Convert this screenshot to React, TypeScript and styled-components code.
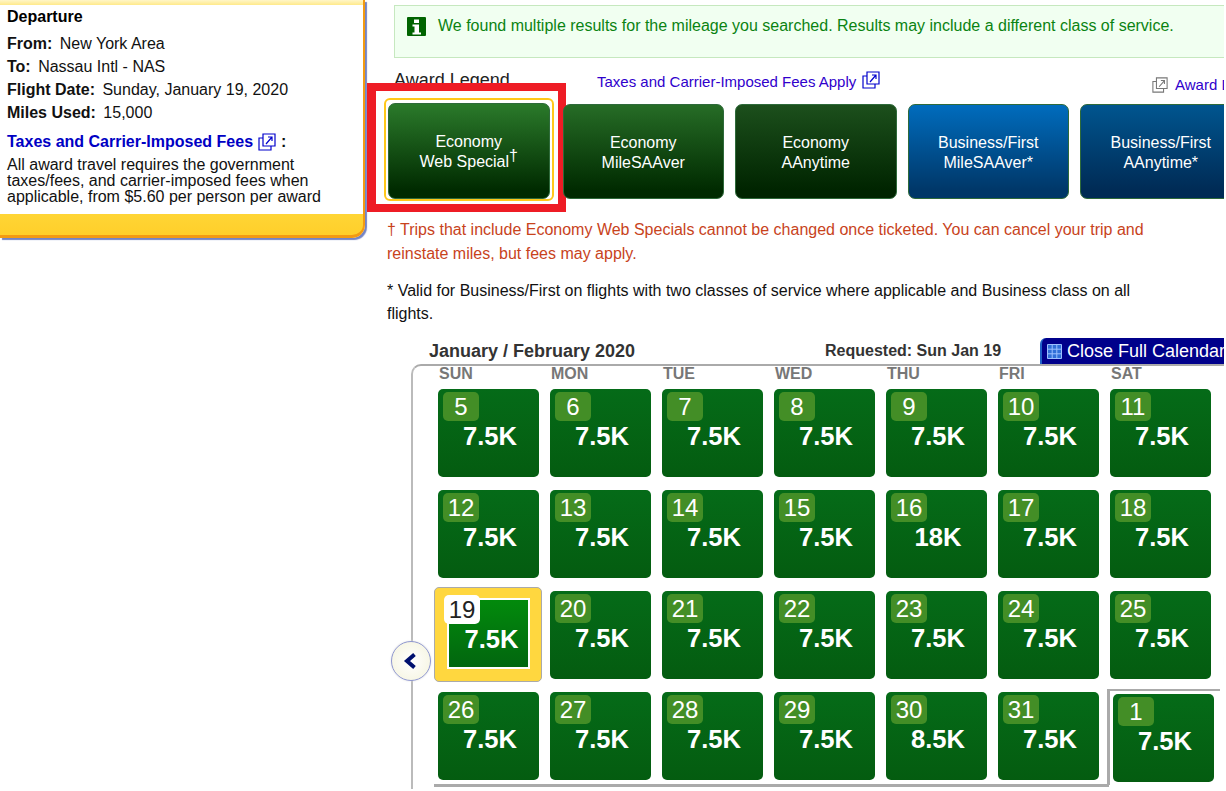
import styled, { createGlobalStyle } from "styled-components";

const weeks = [
  [["5", "7.5K"], ["6", "7.5K"], ["7", "7.5K"], ["8", "7.5K"], ["9", "7.5K"], ["10", "7.5K"], ["11", "7.5K"]],
  [["12", "7.5K"], ["13", "7.5K"], ["14", "7.5K"], ["15", "7.5K"], ["16", "18K"], ["17", "7.5K"], ["18", "7.5K"]],
  [["19", "7.5K"], ["20", "7.5K"], ["21", "7.5K"], ["22", "7.5K"], ["23", "7.5K"], ["24", "7.5K"], ["25", "7.5K"]],
  [["26", "7.5K"], ["27", "7.5K"], ["28", "7.5K"], ["29", "7.5K"], ["30", "8.5K"], ["31", "7.5K"], ["1", "7.5K"]],
];

const dayNames = ["SUN", "MON", "TUE", "WED", "THU", "FRI", "SAT"];

const awards = [
  { top: "#2b7a2b", bottom: "#002a00", line1: "Economy", line2: "Web Special", selected: true },
  { top: "#266c26", bottom: "#002a00", line1: "Economy", line2: "MileSAAver" },
  { top: "#1c4f1c", bottom: "#002400", line1: "Economy", line2: "AAnytime" },
  { top: "#006cbd", bottom: "#003768", line1: "Business/First", line2: "MileSAAver*" },
  { top: "#00558f", bottom: "#002b55", line1: "Business/First", line2: "AAnytime*" },
];

function ExternalIcon({ color = "#0000cc", size = 18 }: { color?: string; size?: number }) {
  return (
    <svg width={size} height={size} viewBox="0 0 18 18" fill="none" stroke={color} strokeWidth="1.2">
      <path d="M5 1h12v12H5z" />
      <path d="M5 5H1v12h12v-4" />
      <path d="M8 11l6-7M10 4h4v4" />
    </svg>
  );
}

function App() {
  return (
    <>
      <GlobalStyle />
      <Page>
        <Sidebar>
          <SidebarBody>
            <SidebarTitle>Departure</SidebarTitle>
            <InfoRow>
              <b>From:</b> New York Area
            </InfoRow>
            <InfoRow>
              <b>To:</b> Nassau Intl - NAS
            </InfoRow>
            <InfoRow>
              <b>Flight Date:</b> Sunday, January 19, 2020
            </InfoRow>
            <InfoRow>
              <b>Miles Used:</b> 15,000
            </InfoRow>
            <FeesTitle>
              <FeesLink>Taxes and Carrier-Imposed Fees</FeesLink> <ExternalIcon />:
            </FeesTitle>
            <FeesText>
              All award travel requires the government taxes/fees, and carrier-imposed fees when applicable, from $5.60
              per person per award
            </FeesText>
          </SidebarBody>
        </Sidebar>
        <Main>
          <Alert>
            <svg width="19" height="19" viewBox="0 0 19 19">
              <rect width="19" height="19" rx="1" fill="#006400" />
              <rect x="7" y="2.5" width="5" height="3.5" fill="#fff" />
              <path d="M5.5 7.5H12v8h2v2H5.5v-2h2v-6h-2z" fill="#fff" />
            </svg>
            We found multiple results for the mileage you searched. Results may include a different class of service.
          </Alert>
          <LegendRow>
            <LegendTitle>Award Legend</LegendTitle>
            <LegendLink>
              Taxes and Carrier-Imposed Fees Apply <ExternalIcon />
            </LegendLink>
            <AwardDetails>
              <ExternalIcon color="#777" size={16} /> Award Details
            </AwardDetails>
          </LegendRow>
          <AwardRow>
            {awards.map((a) => (
              <AwardButton key={a.line1 + a.line2} $top={a.top} $bottom={a.bottom} $selected={a.selected}>
                {a.line1}
                <br />
                {a.line2}
                {a.selected && (
                  <>
                    <sup>†</sup>
                    <RedBox />
                  </>
                )}
              </AwardButton>
            ))}
          </AwardRow>
          <Warning>
            † Trips that include Economy Web Specials cannot be changed once ticketed. You can cancel your trip and
            <br />
            reinstate miles, but fees may apply.
          </Warning>
          <Note>
            * Valid for Business/First on flights with two classes of service where applicable and Business class on all
            <br />
            flights.
          </Note>
          <CalendarHeader>
            <MonthTitle>January / February 2020</MonthTitle>
            <Requested>Requested: Sun Jan 19</Requested>
            <CloseButton>
              <svg width="15" height="15" viewBox="0 0 15 15" fill="#2f6fd8" stroke="#9cc0ff" strokeWidth="1">
                <path d="M.5.5h14v14H.5zM5.2.5v14M9.8.5v14M.5 5.2h14M.5 9.8h14" />
              </svg>
              Close Full Calendar
            </CloseButton>
          </CalendarHeader>
          <CalendarFrame>
            <DayRow>
              {dayNames.map((d) => (
                <DayName key={d}>{d}</DayName>
              ))}
            </DayRow>
            <DayGrid>
              {weeks.flat().map(([day, miles]) => (
                <DayCell key={day} $selected={day === "19"} $nextMonth={day === "1"}>
                  <DayBadge $selected={day === "19"}>{day}</DayBadge>
                  <Miles>{miles}</Miles>
                </DayCell>
              ))}
            </DayGrid>
            <NavArrow $side="prev">
              <svg width="18" height="18" viewBox="0 0 18 18">
                <path d="M12.5 2.5L5 9l7.5 6.5" fill="none" stroke="#00106e" strokeWidth="4" />
              </svg>
            </NavArrow>
            <NavArrow $side="next" />
          </CalendarFrame>
        </Main>
      </Page>
    </>
  );
}

export default App;

const GlobalStyle = createGlobalStyle`
  html, body {
    margin: 0;
    padding: 0;
    background: #fff;
    overflow: hidden;
  }
`;

const Page = styled.div`
  display: flex;
  align-items: flex-start;
  width: 1226px;
  height: 791px;
  overflow: hidden;
  font-family: "Liberation Sans", Arial, sans-serif;
  font-size: 16px;
  color: #111;
`;

const Sidebar = styled.aside`
  flex: 0 0 365px;
  box-sizing: border-box;
  width: 365px;
  height: 238px;
  padding-top: 5px;
  border-right: 2px solid #f39a12;
  border-bottom: 3px solid #f39a12;
  border-bottom-right-radius: 13px;
  background: linear-gradient(#fff6c8, #ffe98a) top / 100% 5px no-repeat, linear-gradient(#fffbe0, #ffd93c 85%, #ffcf2a);
  box-shadow: 2px 2px 1px #7484c4;
`;

const SidebarBody = styled.div`
  box-sizing: border-box;
  height: 209px;
  padding: 3px 0 0 7px;
  background: #fff;
`;

const SidebarTitle = styled.div`
  font-weight: 700;
  line-height: 17px;
  margin-bottom: 7px;
  color: #000;
`;

const InfoRow = styled.div`
  line-height: 23px;

  b {
    margin-right: 3px;
  }
`;

const FeesTitle = styled.div`
  display: flex;
  align-items: center;
  gap: 5px;
  margin-top: 6px;
  height: 24px;
  font-weight: 700;
`;

const FeesLink = styled.span`
  color: #0000c4;
`;

const FeesText = styled.p`
  margin: 3px 0 0;
  width: 335px;
  line-height: 16px;
`;

const Main = styled.main`
  flex: 0 0 861px;
  box-sizing: border-box;
  width: 861px;
  margin-left: -2px;
  padding: 5px 0 0 24px;
  overflow: hidden;
  height: 791px;
`;

const Alert = styled.div`
  display: flex;
  align-items: flex-start;
  gap: 12px;
  box-sizing: border-box;
  width: 860px;
  height: 53px;
  margin-left: 7px;
  padding: 11px 0 0 12px;
  border: 1px solid #c6e8bf;
  background: #f1fff1;
  color: #0b8312;
  line-height: 18px;
  white-space: nowrap;
`;

const LegendRow = styled.div`
  display: flex;
  align-items: flex-start;
  height: 46px;
  padding-left: 7px;
  white-space: nowrap;
`;

const LegendTitle = styled.div`
  flex: 0 0 203px;
  margin-top: 11px;
  font-size: 18px;
  line-height: 22px;
  color: #222;
`;

const LegendLink = styled.div`
  display: flex;
  align-items: flex-start;
  gap: 6px;
  flex: 0 0 555px;
  margin-top: 13px;
  font-size: 15px;
  line-height: 21px;
  color: #3000cc;
`;

const AwardDetails = styled.div`
  display: flex;
  align-items: center;
  gap: 7px;
  margin-top: 17px;
  font-size: 15px;
  line-height: 20px;
  color: #3000cc;
`;

const AwardRow = styled.div`
  display: flex;
  gap: 11px;
  height: 95px;
  width: 900px;
  margin-left: 1px;
`;

const AwardButton = styled.button<{ $top: string; $bottom: string; $selected?: boolean }>`
  position: relative;
  flex: 0 0 161.5px;
  box-sizing: border-box;
  height: ${(p) => (p.$selected ? "96.5px" : "95px")};
  margin-top: ${(p) => (p.$selected ? "-1.5px" : "0")};
  margin-right: ${(p) => (p.$selected ? "2px" : "0")};
  padding: 2px 0 0;
  border: 1px solid #2e6a3a;
  border-radius: 7px;
  background: linear-gradient(${(p) => p.$top}, ${(p) => p.$bottom} 92%);
  color: #fff;
  font-family: inherit;
  font-size: 16px;
  line-height: 20px;
  text-align: center;

  ${(p) =>
    p.$selected &&
    `
    &::before {
      content: "";
      position: absolute;
      inset: -6px -5px -3px -5px;
      border: 2px solid #ffc81a;
      border-radius: 6px;
    }
  `}

  sup {
    font-size: 16px;
    line-height: 0;
    vertical-align: 6px;
  }
`;

const RedBox = styled.span`
  position: absolute;
  left: -22px;
  top: -21px;
  width: 199px;
  height: 129px;
  box-sizing: border-box;
  border: 8px solid #ee1c25;
  border-left-width: 9px;
`;

const Warning = styled.p`
  width: 900px;
  margin: 19px 0 0;
  color: #c8431c;
  line-height: 24px;
`;

const Note = styled.p`
  width: 900px;
  margin: 13px 0 0;
  line-height: 23px;
  color: #111;
`;

const CalendarHeader = styled.div`
  display: flex;
  align-items: flex-end;
  height: 26px;
  margin: 13px 0 0 42px;
  white-space: nowrap;
`;

const MonthTitle = styled.div`
  flex: 0 0 396px;
  font-size: 18px;
  font-weight: 700;
  line-height: 26px;
  color: #333;
`;

const Requested = styled.div`
  flex: 0 0 215px;
  font-size: 16px;
  font-weight: 700;
  line-height: 26px;
  color: #333;
`;

const CloseButton = styled.div`
  display: flex;
  align-items: center;
  gap: 5px;
  flex: 0 0 200px;
  box-sizing: border-box;
  height: 26px;
  padding-left: 5px;
  border-left: 2px solid #1f62c8;
  border-top-left-radius: 6px;
  background: #00008b;
  color: #fff;
  font-size: 18px;
`;

const CalendarFrame = styled.div`
  position: relative;
  box-sizing: border-box;
  width: 900px;
  height: 425px;
  margin-left: 24px;
  padding-left: 25px;
  border-top: 2px solid #aaa;
  border-left: 2px solid #bbb;
  border-top-left-radius: 10px;
`;

const DayRow = styled.div`
  display: grid;
  grid-template-columns: repeat(7, 101px);
  column-gap: 11px;
  height: 23px;
  line-height: 16px;
`;

const DayName = styled.div`
  padding-left: 1px;
  font-size: 16px;
  font-weight: 700;
  color: #777;
`;

const DayGrid = styled.div`
  position: relative;
  display: grid;
  grid-template-columns: repeat(7, 101px);
  grid-auto-rows: 88px;
  gap: 13px 11px;

  &::after {
    content: "";
    position: absolute;
    left: -4px;
    top: 395px;
    width: 675px;
    height: 3px;
    background: #aaa;
  }
`;

const DayCell = styled.div<{ $selected?: boolean; $nextMonth?: boolean }>`
  position: relative;
  box-sizing: border-box;
  padding: 3px 0 0 5px;
  border-radius: 5px;
  background: linear-gradient(#056b18, #045c10);
  color: #fff;

  ${(p) =>
    p.$selected &&
    `
    margin: -4px -3px -3px -4px;
    padding: 7px 0 0 9px;
    border: 1px solid #aaa;
    background: #ffd73f;

    &::before {
      content: "";
      position: absolute;
      left: 12px;
      top: 10px;
      width: 83px;
      height: 71px;
      box-sizing: border-box;
      border: 2px solid #fff;
      background: linear-gradient(#028a0c, #02660f);
    }
  `}

  ${(p) =>
    p.$nextMonth &&
    `
    margin: 2px -3px -2px 3px;

    &::before {
      content: "";
      position: absolute;
      left: -6px;
      top: -5px;
      width: 113px;
      height: 96px;
      box-sizing: border-box;
      border-top: 2px solid #aaa;
      border-left: 3px solid #aaa;
    }
  `}
`;

const DayBadge = styled.div<{ $selected?: boolean }>`
  position: relative;
  width: 36px;
  height: 29px;
  border-radius: 5px;
  background: ${(p) => (p.$selected ? "#fff" : "#438e26")};
  color: ${(p) => (p.$selected ? "#222" : "#fff")};
  font-size: 24px;
  line-height: 30px;
  text-align: center;
`;

const Miles = styled.div`
  position: relative;
  margin: 0 0 0 -2px;
  padding-top: 1px;
  font-size: 25.6px;
  font-weight: 700;
  line-height: 28px;
  text-align: center;
  color: #fff;
`;

const NavArrow = styled.div<{ $side: "prev" | "next" }>`
  position: absolute;
  top: 275px;
  left: ${(p) => (p.$side === "prev" ? "-22px" : "812px")};
  display: flex;
  align-items: center;
  justify-content: center;
  box-sizing: border-box;
  width: 40px;
  height: 40px;
  border: 1px solid #8f97cf;
  border-radius: 50%;
  background: radial-gradient(#fff, #f4f3dc);
  box-shadow: 0 0 2px #ddd;
`;
